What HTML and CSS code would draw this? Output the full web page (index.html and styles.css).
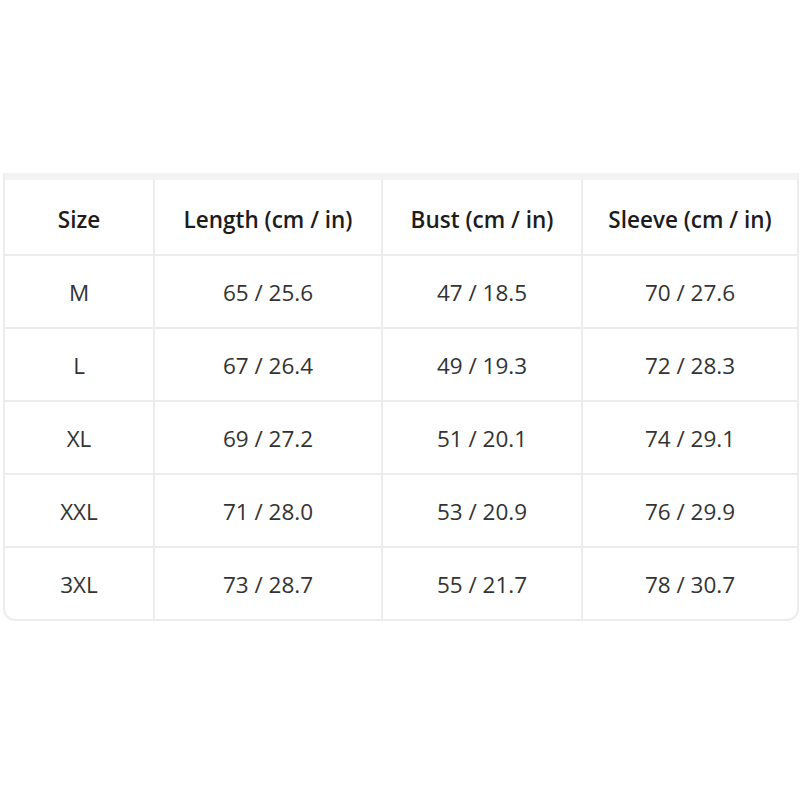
FILE: index.html
```html
<!DOCTYPE html>
<html>
<head>
<meta charset="utf-8">
<link rel="stylesheet" href="styles.css">
</head>
<body>
<div class="page">
  <table class="sizes">
    <colgroup>
      <col class="c1"><col class="c2"><col class="c3"><col class="c4">
    </colgroup>
    <thead>
      <tr><th>Size</th><th>Length (cm / in)</th><th>Bust (cm / in)</th><th>Sleeve (cm / in)</th></tr>
    </thead>
    <tbody>
      <tr><td>M</td><td>65 / 25.6</td><td>47 / 18.5</td><td>70 / 27.6</td></tr>
      <tr><td>L</td><td>67 / 26.4</td><td>49 / 19.3</td><td>72 / 28.3</td></tr>
      <tr><td>XL</td><td>69 / 27.2</td><td>51 / 20.1</td><td>74 / 29.1</td></tr>
      <tr><td>XXL</td><td>71 / 28.0</td><td>53 / 20.9</td><td>76 / 29.9</td></tr>
      <tr><td>3XL</td><td>73 / 28.7</td><td>55 / 21.7</td><td>78 / 30.7</td></tr>
    </tbody>
  </table>
</div>
</body>
</html>
```
FILE: styles.css
```css
html, body {
  margin: 0;
  padding: 0;
  background: #ffffff;
}
.page {
  padding: 173px 0 0 3px;
  font-family: "Open Sans", "Noto Sans", sans-serif;
  color: #2b2b2b;
}
.sizes {
  width: 796px;
  table-layout: fixed;
  border-collapse: separate;
  border-spacing: 0;
  border-top: 7px solid #f2f3f5;
  border-left: 2px solid #ececec;
  border-right: 2px solid #ececec;
  border-bottom: 2px solid #ececec;
  border-radius: 0 0 12px 12px;
  overflow: hidden;
}
.c1 { width: 150px; }
.c2 { width: 228px; }
.c3 { width: 200px; }
.c4 { width: 214px; }
.sizes th, .sizes td {
  text-align: center;
  border-right: 2px solid #ececec;
  border-bottom: 2px solid #ececec;
  padding: 0;
}
.sizes th:last-child, .sizes td:last-child { border-right: none; }
.sizes tbody tr:last-child td { border-bottom: none; }
.sizes th {
  height: 69px;
  padding-top: 5px;
  font-size: 22.5px;
  font-weight: 600;
  color: #1c1c1c;
}
.sizes td {
  height: 69px;
  padding-top: 2px;
  font-size: 22.5px;
  font-weight: 400;
  color: #333333;
}
```
